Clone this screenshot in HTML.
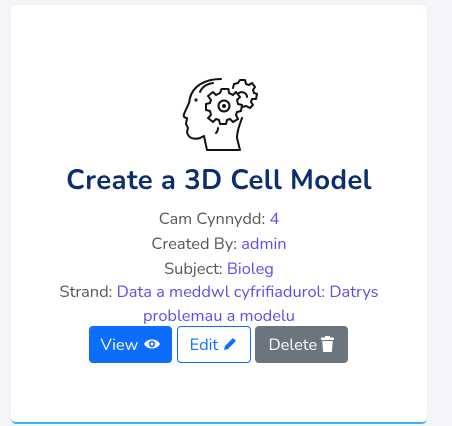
<!DOCTYPE html>
<html><head><style>
html,body{margin:0;padding:0;width:452px;height:426px;background:#f5f6fa;overflow:hidden}
body{font-family:"Nunito","Liberation Sans",sans-serif}
.card{position:absolute;left:11px;top:5px;width:416px;height:417px;background:#fff;border-radius:5px;border-bottom:2px solid #3ab7ef;box-shadow:0 0 12px rgba(0,0,0,.03)}
.t{position:absolute;left:0;width:438px;text-align:center;color:#555;font-size:16.4px}
.t a{color:#5a4de6;text-decoration:none}
h1{position:absolute;left:0;width:438px;top:161px;margin:0;text-align:center;color:#0b2f6d;font-size:27.5px;font-weight:bold;letter-spacing:0.4px}
.btn{position:absolute;top:326px;height:37px;border-radius:4px;font-size:16.4px;line-height:37px;text-align:center;box-sizing:border-box}
</style></head><body>
<div class="card"></div>
<svg style="position:absolute;left:180px;top:76px" width="80" height="80" viewBox="180 76 80 80" fill="none" stroke="#111" stroke-width="2" stroke-linecap="round" stroke-linejoin="round">
<path d="M221 79 C205 79 193 86 190 98 L189 103 L184 114 C183 117 185 118 187 118 L186 124 L188 128 L187 132 C188 138 194 140 200 138 L204 136 L207 150 L240 150 L237 138 C237 130 240 124 242 118"/>
<path d="M200 92 C202 87 207 84 213 83"/>
<circle cx="196" cy="100" r="0.6"/>
<path d="M216 133 C217 132 218 130 218 128"/>
<path d="M221.5 89 L228.5 89 L229 93 L233 95 L236 92 L240 97 L237 100 L238 104 L242 105 L241 111 L237 112 L236 115 L238 119 L233 122 L230 119 L227 120 L226 124 L220 124 L219 120 L216 119 L213 122 L208 118 L211 115 L210 111 L206 110 L206 104 L210 103 L211 100 L208 96 L213 92 L216 95 L220 93 Z"/>
<circle cx="224" cy="106" r="5.5"/>
<circle cx="224" cy="106" r="1" fill="#111"/>
<path d="M233 88 L234 84 L238 83 L240 80 L245 80 L246 84 L249 85 L252 83 L255 87 L253 90 L254 93 L257 94 L256 99 L252 99 L251 102 L253 105 L250 108 L246 106 L242 107"/>
<path d="M239 93 C242 91 247 93 247 97"/>
</svg>
<h1>Create a 3D Cell Model</h1>
<div class="t" style="top:207px">Cam Cynnydd: <a>4</a></div>
<div class="t" style="top:232px">Created By: <a>admin</a></div>
<div class="t" style="top:257px">Subject: <a>Bioleg</a></div>
<div class="t" style="top:280px;line-height:24px">Strand: <a>Data a meddwl cyfrifiadurol: Datrys<br>problemau a modelu</a></div>
<div class="btn" style="left:89px;width:83px;background:#0d6efd;color:#fff">View <svg width="18" height="14" viewBox="0 0 18 14" style="vertical-align:-1px"><path d="M1 7 C4 1 14 1 17 7 C14 13 4 13 1 7Z" fill="#fff"/><circle cx="9" cy="7" r="3.2" fill="#0d6efd"/><circle cx="9" cy="7" r="1.6" fill="#fff"/></svg></div>
<div class="btn" style="left:177px;width:74px;border:1px solid #0d6efd;color:#0d6efd;line-height:35px">Edit <svg width="16" height="16" viewBox="0 0 16 16" style="vertical-align:-2px"><path d="M2 14 L3 10 L11 2 L14 5 L6 13 Z" fill="#0d6efd"/></svg></div>
<div class="btn" style="left:255px;width:93px;background:#6c757d;color:#fff">Delete <svg width="13" height="16" viewBox="0 0 13 16" style="vertical-align:-2px"><rect x="0" y="1.5" width="13" height="2.5" rx="0.5" fill="#fff"/><rect x="4" y="0" width="5" height="2" fill="#fff"/><path d="M1.2 5 L11.8 5 L11 15 C11 15.6 10.5 16 10 16 L3 16 C2.5 16 2 15.6 2 15 Z" fill="#fff"/></svg></div>
</body></html>
